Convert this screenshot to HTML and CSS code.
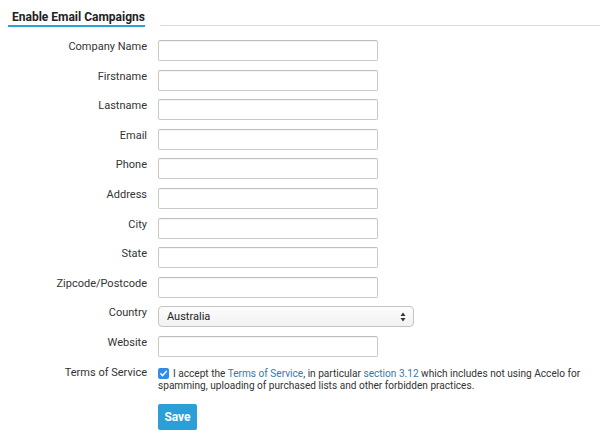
FILE: index.html
```html
<!DOCTYPE html>
<html>
<head>
<meta charset="utf-8">
<link rel="stylesheet" href="styles.css">
</head>
<body>
<div class="page">
  <div class="header">
    <h2 class="title">Enable Email Campaigns</h2>
    <div class="rule"></div>
  </div>
  <form class="form">
    <label class="lbl">Company Name</label><input class="field" type="text">
    <label class="lbl">Firstname</label><input class="field" type="text">
    <label class="lbl">Lastname</label><input class="field" type="text">
    <label class="lbl">Email</label><input class="field" type="text">
    <label class="lbl">Phone</label><input class="field" type="text">
    <label class="lbl">Address</label><input class="field" type="text">
    <label class="lbl">City</label><input class="field" type="text">
    <label class="lbl">State</label><input class="field" type="text">
    <label class="lbl">Zipcode/Postcode</label><input class="field" type="text">
    <label class="lbl">Country</label>
    <div class="select-wrap">
      <select class="select"><option>Australia</option></select>
      <svg class="arrows" width="6" height="10" viewBox="0 0 6 10"><path d="M3 0.5 L5.5 4 L0.5 4 Z M3 9.5 L5.5 6 L0.5 6 Z" fill="#333"/></svg>
    </div>
    <label class="lbl">Website</label><input class="field" type="text">
    <label class="lbl">Terms of Service</label>
    <div class="terms">
      <span class="check"><svg width="11" height="11" viewBox="0 0 11 11"><path d="M2.8 5.8 L4.6 7.6 L8.3 3.4" fill="none" stroke="#fff" stroke-width="1.5" stroke-linecap="round" stroke-linejoin="round"/></svg></span>I accept the <a class="link" href="#">Terms of Service</a>, in particular <a class="link" href="#">section 3.12</a> which includes not using Accelo for spamming, uploading of purchased lists and other forbidden practices.
    </div>
    <span></span>
    <div class="actions"><button class="save" type="button">Save</button></div>
  </form>
</div>
</body>
</html>
```

FILE: styles.css
```css
html, body {
  margin: 0;
  padding: 0;
  background: #fff;
}
.page {
  font-family: Roboto, "Liberation Sans", sans-serif;
  color: #333;
  font-size: 11px;
  width: 600px;
  height: 440px;
  overflow: hidden;
}
.header {
  display: flex;
  align-items: flex-end;
  padding: 9px 0 0 8px;
}
.title {
  margin: 0;
  font-size: 12px;
  line-height: 16px;
  font-weight: 700;
  color: #222;
  padding: 0 0 0 4px;
  white-space: nowrap;
  border-bottom: 2px solid #2a9fd8;
}
.rule {
  flex: 1;
  margin-left: 15px;
  margin-bottom: 1px;
  border-bottom: 1px solid #dcdcdc;
}
.form {
  display: grid;
  grid-template-columns: 147px 1fr;
  column-gap: 11px;
  row-gap: 8.6px;
  margin-top: 13px;
  align-items: start;
}
.lbl {
  text-align: right;
  line-height: 14px;
  white-space: nowrap;
}
.field {
  box-sizing: border-box;
  width: 220px;
  height: 21px;
  margin: 0;
  border: 1px solid #c9c9c9;
  border-top-color: #bdbdbd;
  border-radius: 2px;
  background: #fff;
  box-shadow: inset 0 1px 1px rgba(0,0,0,0.04);
}
.select-wrap {
  position: relative;
  width: 256px;
  height: 21px;
}
.select {
  appearance: none;
  -webkit-appearance: none;
  box-sizing: border-box;
  width: 256px;
  height: 21px;
  margin: 0;
  padding: 0 0 0 8px;
  border: 1px solid #c4c4c4;
  border-radius: 4px;
  background: linear-gradient(#fdfdfd, #f1f1f1);
  font-family: Roboto, "Liberation Sans", sans-serif;
  font-size: 11px;
  color: #222;
}
.arrows {
  position: absolute;
  right: 8px;
  top: 6px;
}
.terms {
  padding-top: 2px;
  font-size: 10.1px;
  line-height: 12px;
  width: 434px;
}
.check {
  display: inline-block;
  width: 11px;
  height: 11px;
  border-radius: 2px;
  background: #2f8fe6;
  vertical-align: -2px;
  margin-right: 4px;
}
.check svg {
  display: block;
}
.link {
  color: #3679a8;
  text-decoration: none;
}
.actions {
  padding-top: 4px;
}
.save {
  box-sizing: border-box;
  height: 26px;
  width: 39px;
  padding: 0;
  border: none;
  border-radius: 2px;
  background: #2a9fd8;
  color: #fff;
  font-family: Roboto, "Liberation Sans", sans-serif;
  font-size: 12px;
  font-weight: 700;
}
```
